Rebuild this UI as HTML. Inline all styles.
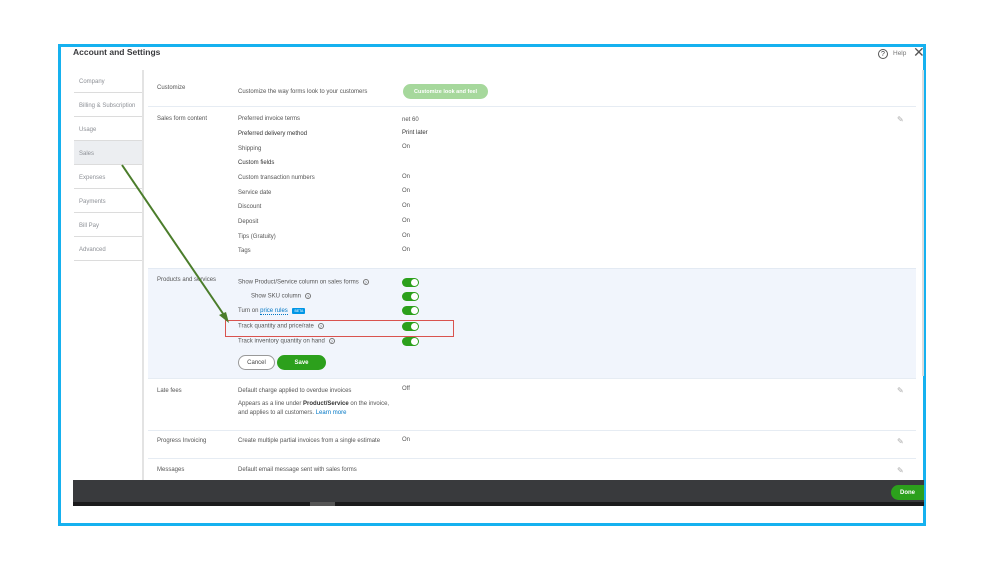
<!DOCTYPE html>
<html><head><meta charset="utf-8"><style>
*{margin:0;padding:0;box-sizing:border-box}
body{width:999px;height:562px;background:#fff;position:relative;overflow:hidden;font-family:"Liberation Sans",sans-serif;color:#393a3d}
.a{position:absolute;white-space:nowrap}
.t{font-size:6px;color:#555}
.frame{position:absolute;left:58px;top:44px;width:868px;height:482px;border:3px solid #16b1ef}
.side{position:absolute;left:74px;width:68px;height:24px;border-bottom:1.5px solid #dcdcdc;font-size:6px;color:#8d9096;padding:10px 0 0 5px}
.tg{position:absolute;left:402px;width:17px;height:9px;border-radius:5px;background:#2ca01c}
.tg:after{content:"";position:absolute;right:1px;top:1px;width:7px;height:7px;border-radius:50%;background:#fff}
.hr{position:absolute;left:148px;width:768px;height:1px;background:#e6ecf3}
.q{display:inline-block;width:6px;height:6px;border:0.7px solid #777;border-radius:50%;font-size:4px;text-align:center;line-height:5px;margin-left:4px;vertical-align:middle}
.pen{position:absolute;left:897px;font-size:8px;color:#aaa}
.btn{position:absolute;display:flex;align-items:center;justify-content:center;font-size:6px;border-radius:8px}
</style></head><body>
<div class="frame"></div>
<div class="a" style="left:73px;top:47px;font-size:8.5px;font-weight:bold;color:#393a3d">Account and Settings</div>
<div class="a" style="left:878px;top:49px;width:10px;height:10px;border:1px solid #555;border-radius:50%;font-size:7px;text-align:center;line-height:9px">?</div>
<div class="a" style="left:893px;top:50px;font-size:6.5px;color:#777">Help</div>
<div class="a" style="left:913px;top:44px;font-size:14px;color:#555">✕</div>
<div class="a" style="left:922px;top:70px;width:2px;height:306px;background:#ddd"></div>
<div class="a" style="left:142px;top:70px;width:1.5px;height:412px;background:#e3e3e3"></div>
<div class="side" style="top:69px">Company</div>
<div class="side" style="top:93px">Billing &amp; Subscription</div>
<div class="side" style="top:117px">Usage</div>
<div class="side" style="top:141px;background:#eceef1">Sales</div>
<div class="side" style="top:165px">Expenses</div>
<div class="side" style="top:189px">Payments</div>
<div class="side" style="top:213px">Bill Pay</div>
<div class="side" style="top:237px">Advanced</div>

<div class="a t" style="left:157px;top:85px">Customize</div>
<div class="a t" style="left:238px;top:89px">Customize the way forms look to your customers</div>
<div class="btn" style="left:403px;top:84px;width:85px;height:15px;background:#a6d89c;color:#fff;font-size:5.5px;font-weight:bold">Customize look and feel</div>
<div class="hr" style="top:106px"></div>

<div class="a t" style="left:157px;top:116px">Sales form content</div>
<div class="pen" style="top:115px">✎</div>
<div class="a t" style="left:238px;top:116px">Preferred invoice terms</div><div class="a t" style="left:402px;top:117px">net 60</div>
<div class="a t" style="left:238px;top:131px;color:#333">Preferred delivery method</div><div class="a t" style="left:402px;top:130px;color:#333">Print later</div>
<div class="a t" style="left:238px;top:146px">Shipping</div><div class="a t" style="left:402px;top:144px">On</div>
<div class="a t" style="left:238px;top:160px;color:#333">Custom fields</div>
<div class="a t" style="left:238px;top:175px">Custom transaction numbers</div><div class="a t" style="left:402px;top:174px">On</div>
<div class="a t" style="left:238px;top:190px">Service date</div><div class="a t" style="left:402px;top:188px">On</div>
<div class="a t" style="left:238px;top:204px">Discount</div><div class="a t" style="left:402px;top:203px">On</div>
<div class="a t" style="left:238px;top:219px">Deposit</div><div class="a t" style="left:402px;top:218px">On</div>
<div class="a t" style="left:238px;top:234px">Tips (Gratuity)</div><div class="a t" style="left:402px;top:233px">On</div>
<div class="a t" style="left:238px;top:248px">Tags</div><div class="a t" style="left:402px;top:247px">On</div>

<div class="a" style="left:148px;top:268px;width:768px;height:110px;background:#f1f5fc;border-top:1px solid #e3eaf3"></div>
<div class="a t" style="left:157px;top:277px">Products and services</div>
<div class="a t" style="left:238px;top:279px">Show Product/Service column on sales forms<span class="q">?</span></div><div class="tg" style="top:278px"></div>
<div class="a t" style="left:251px;top:293px">Show SKU column<span class="q">?</span></div><div class="tg" style="top:292px"></div>
<div class="a t" style="left:238px;top:308px">Turn on <span style="color:#0077c5;border-bottom:0.7px dotted #0077c5">price rules</span> <span style="display:inline-block;background:#0096e6;color:#fff;font-size:3.5px;padding:1px 2px;border-radius:1px;margin-left:3px">BETA</span></div><div class="tg" style="top:306px"></div>
<div class="a t" style="left:238px;top:323px">Track quantity and price/rate<span class="q">?</span></div><div class="tg" style="top:322px"></div>
<div class="a t" style="left:238px;top:338px">Track inventory quantity on hand<span class="q">?</span></div><div class="tg" style="top:337px"></div>
<div class="a" style="left:225px;top:320px;width:229px;height:17px;border:1.3px solid #d9534f"></div>
<div class="btn" style="left:238px;top:355px;width:37px;height:15px;border:1px solid #999;background:#fff;color:#444">Cancel</div>
<div class="btn" style="left:277px;top:355px;width:49px;height:15px;background:#2ca01c;font-weight:bold;color:#fff">Save</div>
<div class="hr" style="top:378px"></div>

<div class="a t" style="left:157px;top:388px">Late fees</div>
<div class="pen" style="top:386px">✎</div>
<div class="a t" style="left:238px;top:388px">Default charge applied to overdue invoices</div><div class="a t" style="left:402px;top:386px">Off</div>
<div class="a t" style="left:238px;top:401px">Appears as a line under <b style="color:#333">Product/Service</b> on the invoice,</div>
<div class="a t" style="left:238px;top:410px">and applies to all customers. <span style="color:#0077c5">Learn more</span></div>
<div class="hr" style="top:430px"></div>
<div class="a t" style="left:157px;top:438px">Progress Invoicing</div>
<div class="a t" style="left:238px;top:438px">Create multiple partial invoices from a single estimate</div><div class="a t" style="left:402px;top:437px">On</div>
<div class="pen" style="top:437px">✎</div>
<div class="hr" style="top:458px"></div>
<div class="a t" style="left:157px;top:467px">Messages</div>
<div class="a t" style="left:238px;top:467px">Default email message sent with sales forms</div>
<div class="pen" style="top:466px">✎</div>

<div class="a" style="left:73px;top:480px;width:851px;height:22px;background:#393a3d"></div>
<div class="a" style="left:73px;top:502px;width:851px;height:4px;background:#1b1b1c"></div>
<div class="a" style="left:310px;top:502px;width:25px;height:4px;background:#555"></div>
<div class="btn" style="left:891px;top:485px;width:33px;height:15px;border-radius:8px 0 0 8px;background:#2ca01c;font-weight:bold;color:#fff">Done</div>

<svg class="a" style="left:0;top:0" width="999" height="562">
<line x1="122" y1="165" x2="226" y2="318" stroke="#4b7d2b" stroke-width="2"/>
<polygon points="229,323 219,315 226,312" fill="#4b7d2b"/>
</svg>
</body></html>
